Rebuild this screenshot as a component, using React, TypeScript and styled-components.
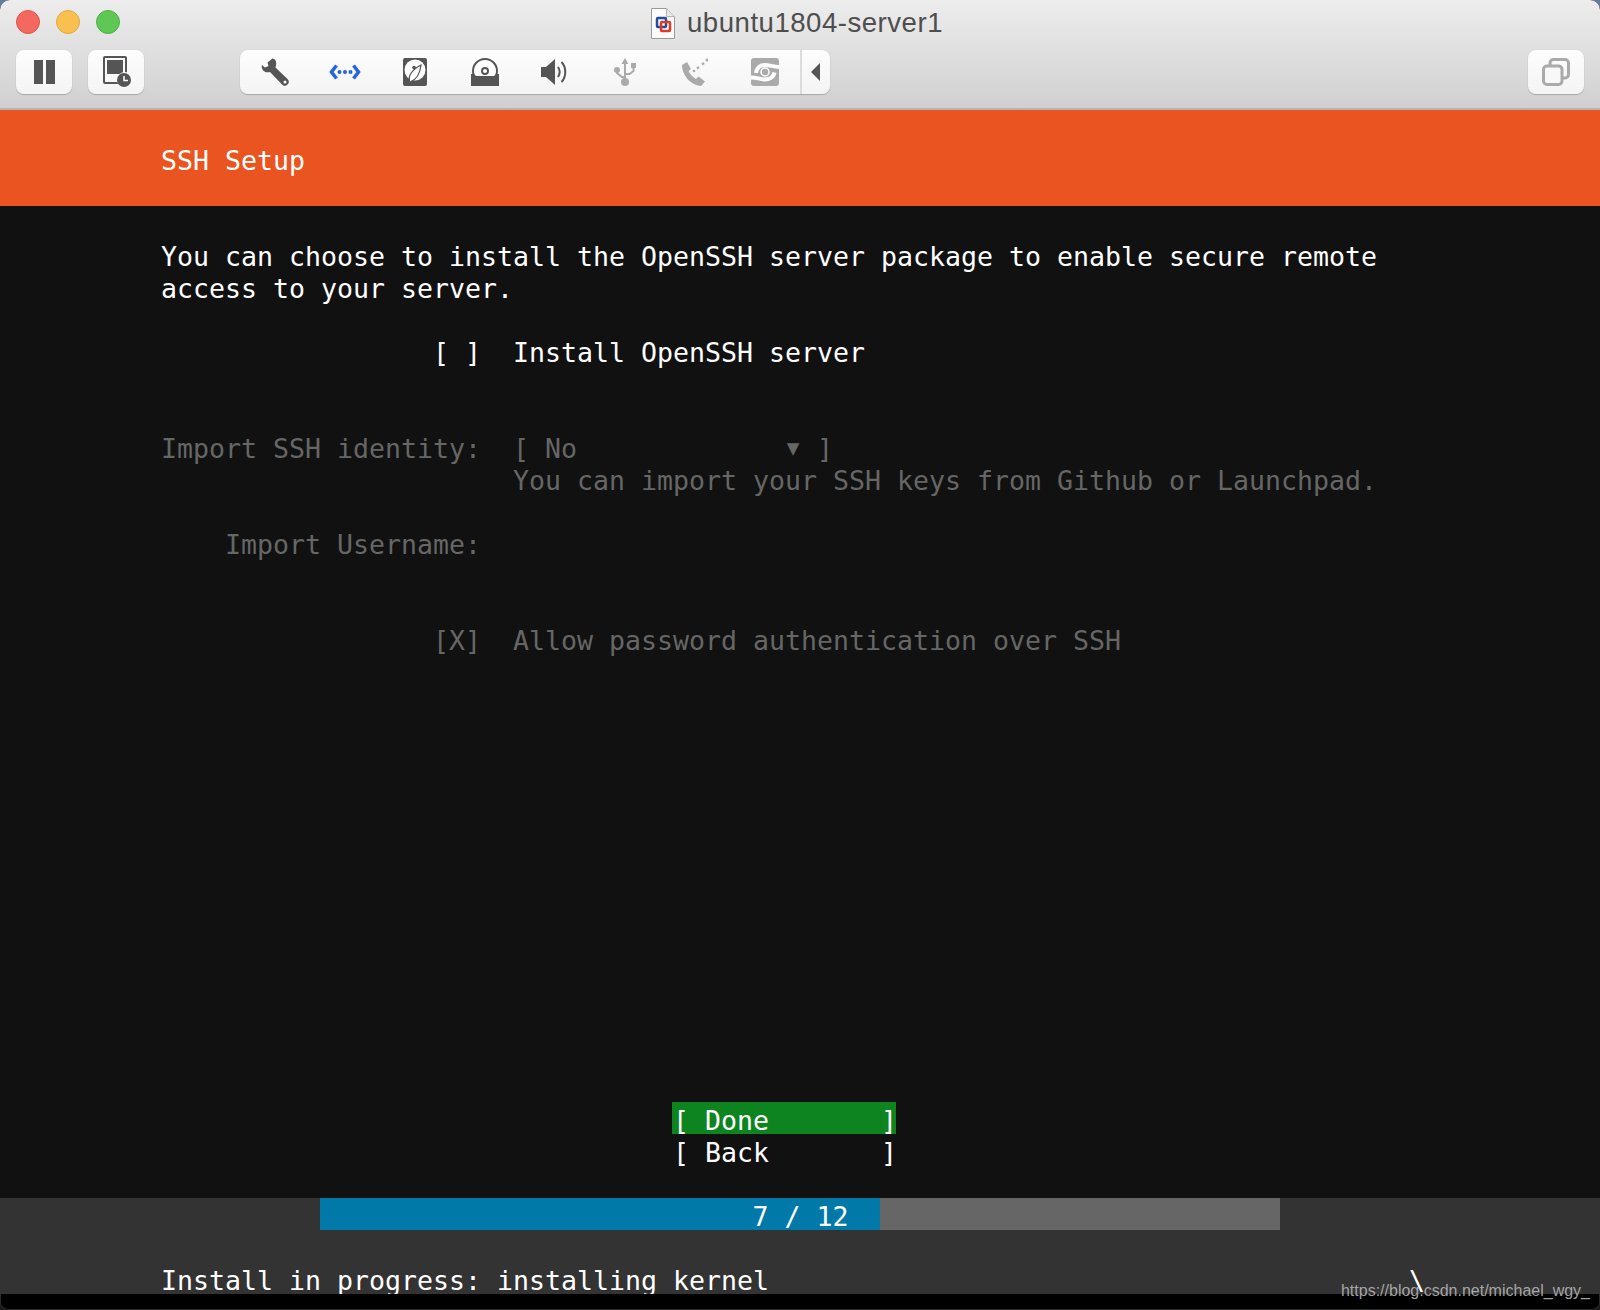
import React from 'react';
import styled, { createGlobalStyle } from 'styled-components';

const GlobalStyle = createGlobalStyle`
  html, body {
    margin: 0;
    padding: 0;
    background: #6b7a99;
  }
`;

const Window = styled.div`
  position: relative;
  width: 1600px;
  height: 1310px;
  overflow: hidden;
  border-radius: 10px 10px 0 0;
  background: #1a1a1a;
`;

const Chrome = styled.div`
  height: 108px;
  display: flex;
  flex-direction: column;
  background: linear-gradient(#ededed, #d0d0d0);
  border-bottom: 2px solid #b4b4b4;
  font-family: 'Liberation Sans', Arial, sans-serif;
`;

const TitleRow = styled.div`
  height: 44px;
  padding: 0 22px 0 16px;
  box-sizing: border-box;
  display: grid;
  grid-template-columns: 1fr auto 1fr;
  align-items: center;
`;

const Lights = styled.div`
  display: flex;
  gap: 16px;
`;

const Light = styled.span<{ $fill: string; $edge: string }>`
  width: 24px;
  height: 24px;
  box-sizing: border-box;
  border-radius: 50%;
  background: ${(p) => p.$fill};
  border: 1px solid ${(p) => p.$edge};
`;

const Title = styled.div`
  display: flex;
  align-items: center;
  gap: 12px;
  margin-top: 2px;
  font-size: 27.6px;
  letter-spacing: 0.5px;
  color: #4e4e4e;
`;

const Toolbar = styled.div`
  display: flex;
  gap: 16px;
  padding: 6px 16px 0;
`;

const ToolButton = styled.div`
  width: 56px;
  height: 44px;
  box-sizing: border-box;
  display: flex;
  align-items: center;
  justify-content: center;
  border-radius: 8px;
  background: linear-gradient(#fdfdfd, #f4f4f4);
  box-shadow: 0 1px 1px #a8a8a8, 0 0 1px #b8b8b8;
`;

const RightButton = styled(ToolButton)`
  margin-left: auto;
`;

const DeviceGroup = styled(ToolButton)`
  width: 590px;
  margin-left: 80px;
  justify-content: flex-start;
`;

const Slot = styled.div`
  width: 70px;
  height: 100%;
  display: flex;
  align-items: center;
  justify-content: center;
`;

const ArrowSlot = styled.div`
  flex: 1;
  height: 100%;
  display: flex;
  align-items: center;
  justify-content: center;
  border-left: 2px solid #dcdcdc;
`;

const Terminal = styled.div`
  font-family: 'DejaVu Sans Mono', 'Liberation Mono', monospace;
  font-size: 26.58px;
  line-height: 38px;
  text-indent: 1px;
  white-space: pre;
  color: #fff;
  background: #111;
`;

const Header = styled.div`
  height: 96px;
  padding-top: 32px;
  box-sizing: border-box;
  background: #e95420;
`;

const Line = styled.div<{ $muted?: boolean }>`
  height: 32px;
  color: ${(p) => (p.$muted ? '#666' : 'inherit')};
`;

const Caret = styled.span`
  display: inline-block;
  width: 16px;
  position: relative;
  top: -3px;
  font-size: 21px;
  line-height: 32px;
  text-indent: 0;
  text-align: center;
`;

const Body = styled.div`
  height: 896px;
`;

const Buttons = styled.div`
  height: 96px;
`;

const Button = styled.div<{ $active?: boolean }>`
  width: 224px;
  height: 32px;
  margin-left: 672px;
  background: ${(p) => (p.$active ? '#0e8420' : 'transparent')};
`;

const Footer = styled.div`
  height: 96px;
  overflow: hidden;
  background: #333;
`;

const Progress = styled.div`
  width: 960px;
  height: 32px;
  margin-left: 320px;
  position: relative;
  text-align: center;
  background: #666;
`;

const ProgressFill = styled.div`
  position: absolute;
  inset: 0 auto 0 0;
  background: #0079a8;
`;

const ProgressLabel = styled.span`
  position: relative;
`;

const Status = styled.div`
  height: 32px;
  margin-top: 32px;
`;

const BottomEdge = styled.div`
  height: 16px;
  box-sizing: border-box;
  background: #000;
  border: 1px solid #2b2b2b;
  border-top: 0;
  border-radius: 0 0 8px 8px;
`;

const Watermark = styled.div`
  position: absolute;
  right: 10px;
  bottom: 9px;
  font-family: 'Liberation Sans', Arial, sans-serif;
  font-size: 16px;
  line-height: 20px;
  color: rgba(190, 190, 190, 0.85);
`;

const Pause = () => (
  <svg width="22" height="24" viewBox="0 0 22 24">
    <rect x="1" width="9" height="24" fill="#555" />
    <rect x="13" width="9" height="24" fill="#555" />
  </svg>
);

const Snapshot = () => (
  <svg width="30" height="32" viewBox="0 0 30 32" style={{ marginLeft: 4 }}>
    <rect x="1" y="1" width="22" height="26" rx="1" fill="none" stroke="#555" strokeWidth="2" />
    <rect x="4" y="4" width="16" height="14" fill="#555" />
    <circle cx="22" cy="24" r="8" fill="#fafafa" />
    <circle cx="21" cy="24" r="7" fill="#555" />
    <path d="M21 20v4.500h4" fill="none" stroke="#fff" strokeWidth="1.500" />
  </svg>
);

const Wrench = () => (
  <svg width="28" height="28" viewBox="0 0 28 28">
    <path
      d="M11.500.500 6.500 4.500 7.500 8 4 9.500.800 7C0 12 4 15.500 9 14L21 26.500a3.600 3.600 0 0 0 5.500-5.500L14.500 9.500C16 4 15 1 11.500.500Z"
      fill="#555"
    />
    <circle cx="24" cy="24" r="1.500" fill="#fff" />
  </svg>
);

const Network = () => (
  <svg width="32" height="16" viewBox="0 0 32 16">
    <path d="M7.500 1.500 2.500 8l5 6.500M24.500 1.500 29.500 8l-5 6.500" fill="none" stroke="#2563e0" strokeWidth="3.500" />
    <circle cx="10.500" cy="8" r="2" fill="#2563e0" />
    <circle cx="16" cy="8" r="2" fill="#2563e0" />
    <circle cx="21.500" cy="8" r="2" fill="#2563e0" />
  </svg>
);

const Disk = () => (
  <svg width="24" height="28" viewBox="0 0 24 28">
    <rect width="24" height="28" rx="2" fill="#555" />
    <circle cx="12" cy="12" r="10.500" fill="#fff" />
    <path d="M18 7C17 16 13 22 7 24 4 18 10 11 18 7Z" fill="#fff" stroke="#555" strokeWidth="1.200" />
    <circle cx="11" cy="9.500" r="1.800" fill="#555" />
  </svg>
);

const Disc = () => (
  <svg width="28" height="28" viewBox="0 0 28 28">
    <circle cx="14" cy="13" r="12" fill="#fff" stroke="#555" strokeWidth="2" />
    <circle cx="14" cy="13" r="3" fill="#fff" stroke="#555" strokeWidth="2" />
    <path d="M0 16h3l2 2h18l2-2h3v12H0Z" fill="#555" />
  </svg>
);

const Speaker = () => (
  <svg width="28" height="26" viewBox="0 0 28 26">
    <path d="M0 8h5l9-8v26l-9-8H0Z" fill="#555" />
    <path d="M17 8c2 3 2 7 0 10M20.500 3c5 5 5 15 0 20" fill="none" stroke="#555" strokeWidth="2" />
  </svg>
);

const Usb = () => (
  <svg width="22" height="28" viewBox="0 0 22 28">
    <path d="M11 0l3.500 6h-2.500v16h-2V6H7.500Z" fill="#aaa" />
    <circle cx="11" cy="24" r="4" fill="#aaa" />
    <circle cx="3" cy="12" r="3" fill="#aaa" />
    <rect x="17" y="5" width="5" height="5" fill="#aaa" />
    <path d="M3 12v3l5 4h3M19.500 9v4l-4 3h-4" fill="none" stroke="#aaa" strokeWidth="2" />
  </svg>
);

const Phone = () => (
  <svg width="26" height="28" viewBox="0 0 26 28">
    <path
      d="M0 7 5 4 9 11 6.500 13C8 16 10.500 19 14 21L16.500 18.500 23 23.500 19 28C8 27 0 17 0 7Z"
      fill="#aaa"
    />
    <circle cx="12" cy="13" r="1.300" fill="#aaa" />
    <path d="M15 10.500l2-1.500M20 6.500l2-1.500" stroke="#aaa" strokeWidth="2.200" />
    <circle cx="25" cy="2" r="1.500" fill="#aaa" />
  </svg>
);

const Capture = () => (
  <svg width="28" height="28" viewBox="0 0 28 28">
    <rect width="28" height="28" rx="3" fill="#aaa" />
    <path d="M5 15C6 9 10 7 14 7s8 1.500 14 2M0 19.500c6 0 10 2 14 2s8.500-2 9.500-7" fill="none" stroke="#fff" strokeWidth="4" />
    <circle cx="14" cy="14" r="4" fill="#aaa" stroke="#fff" strokeWidth="1.500" />
  </svg>
);

const Arrow = () => (
  <svg width="10" height="18" viewBox="0 0 10 18">
    <path d="M9 0v18L0 9Z" fill="#555" />
  </svg>
);

const Windows = () => (
  <svg width="28" height="28" viewBox="0 0 28 28">
    <rect x="8" y="1.500" width="18.500" height="18.500" rx="3.500" fill="none" stroke="#aaa" strokeWidth="3" />
    <rect x="1.500" y="8" width="18.500" height="18.500" rx="3.500" fill="#f8f8f8" stroke="#aaa" strokeWidth="3" />
  </svg>
);

const VmFile = () => (
  <svg width="24" height="31" viewBox="0 0 24 31">
    <path d="M.500.500h15l8 8v22H.500Z" fill="#fbfbfb" stroke="#9a9a9a" />
    <path d="M15.500.500v8h8" fill="#e8e8e8" stroke="#b5b5b5" />
    <rect x="6" y="10" width="9" height="9" rx="1" fill="none" stroke="#1f4fa5" strokeWidth="2.500" />
    <rect x="10" y="14" width="9" height="9" rx="1" fill="none" stroke="#e03a25" strokeWidth="2.500" />
  </svg>
);

const devices = [Wrench, Network, Disk, Disc, Speaker, Usb, Phone, Capture];

const App: React.FC = () => {
  return (
    <>
      <GlobalStyle />
      <Window>
        <Chrome>
          <TitleRow>
            <Lights>
              <Light $fill="#f4695f" $edge="#e0534a" />
              <Light $fill="#fac04f" $edge="#e3a63c" />
              <Light $fill="#5fc854" $edge="#4fb145" />
            </Lights>
            <Title>
              <VmFile />
              ubuntu1804-server1
            </Title>
          </TitleRow>
          <Toolbar>
            <ToolButton>
              <Pause />
            </ToolButton>
            <ToolButton>
              <Snapshot />
            </ToolButton>
            <DeviceGroup>
              {devices.map((Icon, i) => (
                <Slot key={i}>
                  <Icon />
                </Slot>
              ))}
              <ArrowSlot>
                <Arrow />
              </ArrowSlot>
            </DeviceGroup>
            <RightButton>
              <Windows />
            </RightButton>
          </Toolbar>
        </Chrome>
        <Terminal>
          <Header>{'          SSH Setup'}</Header>
          <Body>
            <Line />
            <Line>{'          You can choose to install the OpenSSH server package to enable secure remote'}</Line>
            <Line>{'          access to your server.'}</Line>
            <Line />
            <Line>{'                           [ ]  Install OpenSSH server'}</Line>
            <Line />
            <Line />
            <Line $muted>
              {'          Import SSH identity:  [ No             '}
              <Caret>▼</Caret>
              {' ]'}
            </Line>
            <Line $muted>{'                                You can import your SSH keys from Github or Launchpad.'}</Line>
            <Line />
            <Line $muted>{'              Import Username:'}</Line>
            <Line />
            <Line />
            <Line $muted>{'                           [X]  Allow password authentication over SSH'}</Line>
          </Body>
          <Buttons>
            <Button $active>{'[ Done       ]'}</Button>
            <Button>{'[ Back       ]'}</Button>
          </Buttons>
          <Footer>
            <Progress>
              <ProgressFill style={{ width: `${(7 / 12) * 100}%` }} />
              <ProgressLabel>7 / 12</ProgressLabel>
            </Progress>
            <Status>{'          Install in progress: installing kernel                                        \\'}</Status>
          </Footer>
        </Terminal>
        <BottomEdge />
        <Watermark>https://blog.csdn.net/michael_wgy_</Watermark>
      </Window>
    </>
  );
};

export default App;
